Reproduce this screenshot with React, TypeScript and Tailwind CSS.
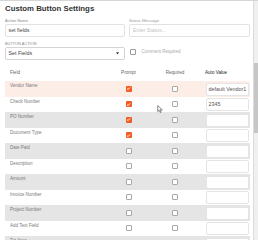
import { useState } from "react";

type FieldRow = { name: string; prompt?: boolean; value?: string };

const rows: FieldRow[] = [
  { name: "Vendor Name", prompt: true, value: "default Vendor1" },
  { name: "Check Number", prompt: true, value: "2345" },
  { name: "PO Number", prompt: true },
  { name: "Document Type", prompt: true },
  { name: "Date Paid" },
  { name: "Description" },
  { name: "Amount" },
  { name: "Invoice Number" },
  { name: "Project Number" },
  { name: "Add Text Field" },
  { name: "Txt Area" },
];

function Check({ checked }: { checked?: boolean }) {
  if (checked) {
    return (
      <span className="flex h-[6px] w-[6px] items-center justify-center rounded-[1px] bg-[#f25c22]">
        <svg viewBox="0 0 10 10" className="h-[5px] w-[5px]">
          <path d="M2 5.2 4.2 7.3 8 2.8" fill="none" stroke="#fff" strokeWidth="1.8" />
        </svg>
      </span>
    );
  }
  return <span className="block h-[6px] w-[6px] rounded-[1px] border border-[#a8a8a8] bg-white" />;
}

export default function App() {
  const [hovered] = useState(0);

  return (
    <div className="relative flex h-[240px] w-[258px] overflow-hidden border-t border-[#d6d6d6] bg-white font-['Liberation_Sans',Arial,sans-serif]">
      <div className="w-[254px] shrink-0 border-r border-[#dcdcdc] pl-[5px] pt-[2px]">
        <h1 className="text-[7.8px] font-bold leading-[11px] text-[#333]">Custom Button Settings</h1>

        {/* top form */}
        <div className="mt-[3.5px] grid grid-cols-[120px_121px] gap-x-[4px]">
          <div>
            <p className="text-[4px] leading-[5px] text-[#888]">Action Name</p>
            <div className="mt-[1.5px] flex h-[13px] items-center rounded-[2px] border border-[#e2e2e2] pl-[2.5px] text-[5.3px] text-[#444]">
              set fields
            </div>
          </div>
          <div>
            <p className="text-[4.2px] leading-[5px] text-[#999]">Status Message</p>
            <div className="mt-[1.5px] flex h-[13px] items-center rounded-[2px] border border-[#e2e2e2] pl-[3px] text-[5.2px] text-[#c4c4c4]">
              Enter Status...
            </div>
          </div>

          <div className="mt-[4px]">
            <p className="text-[3.9px] leading-[5px] text-[#888]">BUTTON ACTION</p>
            <div className="mt-[1px] flex h-[13px] items-center justify-between rounded-[2px] border border-[#d4d4d4] pl-[2.5px] pr-[5px] text-[5.3px] text-[#444]">
              <span>Set Fields</span>
              <svg viewBox="0 0 4 3" className="h-[2.5px] w-[3px]">
                <polygon points="0,0 4,0 2,3" fill="#333" />
              </svg>
            </div>
          </div>
          <div className="mt-[4px] flex items-end">
            <div className="flex h-[16px] items-center gap-[5.5px] pl-[1px]">
              <span className="block h-[6px] w-[6px] rounded-[1px] border border-[#9a9a9a] bg-white" />
              <span className="text-[4.5px] text-[#aaa]">Comment Required</span>
            </div>
          </div>
        </div>

        {/* fields table */}
        <div className="mt-[5px] w-[245px]">
          <div className="grid h-[16px] grid-cols-[105px_37px_56px_47px] items-center text-[4.6px] text-[#666]">
            <span className="pl-[5px]">Field</span>
            <span className="text-center">Prompt</span>
            <span className="text-center">Required</span>
            <span className="pl-[2px] text-[#222]">Auto Value</span>
          </div>
          {rows.map((row, i) => {
            const bg = i === hovered ? "bg-[#fdede7]" : i % 2 === 0 ? "bg-[#e5e5e5]" : "bg-white";
            return (
              <div key={row.name} className={`grid h-[15.5px] grid-cols-[105px_37px_56px_47px] ${bg}`}>
                <span className="flex items-center pb-[4px] pl-[5px] text-[4.5px] text-[#7a7a7a]">{row.name}</span>
                <span className="flex items-center justify-center">
                  <Check checked={row.prompt} />
                </span>
                <span className="flex items-center justify-center">
                  <Check />
                </span>
                <span className="pl-[3px] pr-[1px] pt-[1.5px]">
                  <span className="flex h-[13px] items-center overflow-hidden whitespace-nowrap rounded-[2px] border border-[#e4e4e4] bg-white pl-[1.5px] text-[5.4px] text-[#555]">
                    {row.value}
                  </span>
                </span>
              </div>
            );
          })}
        </div>
      </div>

      {/* scrollbar */}
      <div className="flex w-[4px] flex-col bg-[#f0f0f0]">
        <div className="mt-[62px] h-[70px] bg-[#c6c6c6]" />
      </div>

      {/* mouse pointer */}
      <svg viewBox="0 0 10 14" className="absolute left-[157px] top-[104px] h-[8px] w-[6px]">
        <path d="M1 1v10.5l2.6-2.4 1.8 4 1.6-.7-1.8-3.9H9z" fill="#fff" stroke="#333" strokeWidth="1" strokeLinejoin="round" />
      </svg>
    </div>
  );
}
